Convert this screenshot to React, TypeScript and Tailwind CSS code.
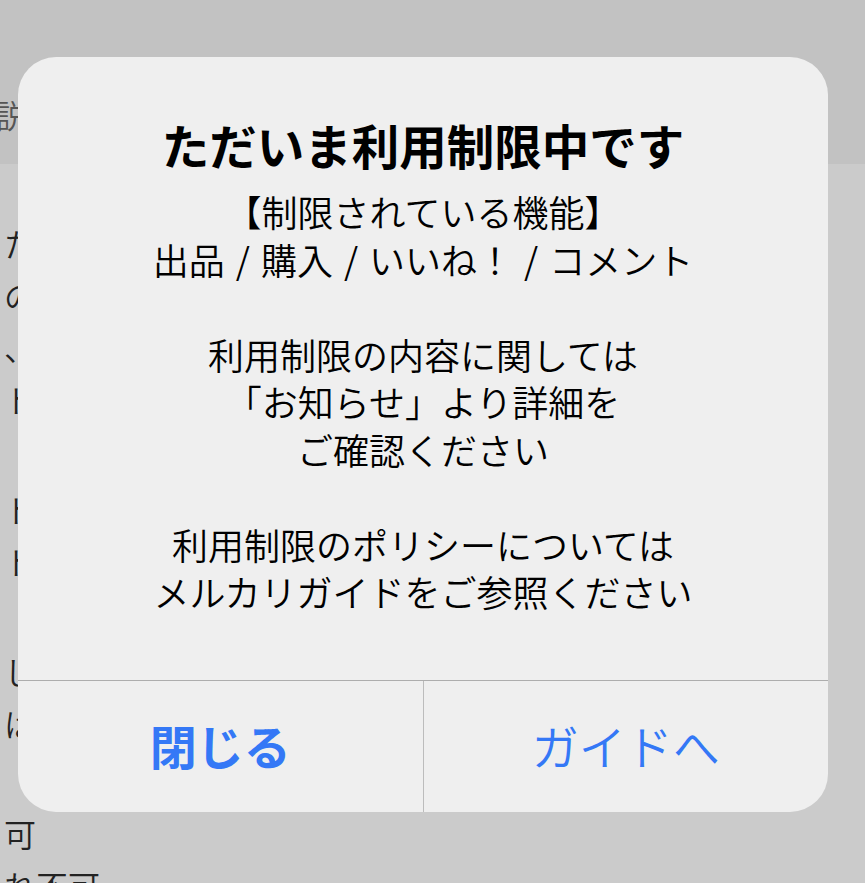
import React from 'react';

const font = { fontFamily: '"Noto Sans CJK JP", "Noto Sans", sans-serif' };

// page text sitting under the dimmed overlay
const pageLines: { text: string; gap?: boolean }[] = [
  { text: 'たくさんの方にご利用いただくため' },
  { text: 'の規約に反する行為が確認された場合' },
  { text: '、利用を一部制限しています' },
  { text: 'ト記の機能が対象となります', gap: true },
  { text: 'ト記の内容をご確認ください' },
  { text: 'ト記以外の機能はご利用いただけます', gap: true },
  { text: 'しばらく経ってから再度お試しください' },
  { text: 'はじめての方はガイドをご覧ください', gap: true },
  { text: '可' },
  { text: 'れ不可' },
];

const AlertDialog: React.FC = () => {
  return (
    <div className="absolute left-[18px] top-[57px] w-[810px] h-[755px] rounded-[38px] bg-[#efefef] flex flex-col overflow-hidden">
      <div className="h-[623px] flex flex-col items-center pt-[60px] text-center">
        <h2 className="text-[47.5px] leading-[56px] font-bold text-black">ただいま利用制限中です</h2>
        <div className="mt-[15px] text-[36px] leading-[47.5px] font-[350] text-black">
          <p>【制限されている機能】</p>
          <p className="[word-spacing:3px]">出品 / 購入 / いいね！ / コメント</p>
          <p>&nbsp;</p>
          <p>利用制限の内容に関しては</p>
          <p>「お知らせ」より詳細を</p>
          <p>ご確認ください</p>
          <p>&nbsp;</p>
          <p>利用制限のポリシーについては</p>
          <p>メルカリガイドをご参照ください</p>
        </div>
      </div>
      <div className="flex-1 flex border-t border-[#adadad]">
        <button className="flex-1 flex items-center justify-center pb-[2px] text-[47px] font-bold text-[#3478f6] border-r border-[#bcbcbc]">
          閉じる
        </button>
        <button className="flex-1 flex items-center justify-center pb-[2px] text-[47px] font-[350] text-[#3478f6]">
          ガイドへ
        </button>
      </div>
    </div>
  );
};

export default function App() {
  return (
    <div className="relative w-[865px] h-[883px] overflow-hidden bg-[#cbcbcb]" style={font}>
      <div className="h-[164px] bg-[#c2c2c2] flex items-center">
        <span className="ml-[-4px] mt-[64px] text-[32px] leading-none font-[350] text-[#555]">説明</span>
      </div>
      <div className="pt-[53px] pl-[4px] text-[32px] leading-[52px] font-[350] text-[#222] whitespace-nowrap">
        {pageLines.map((line, i) => (
          <p key={i} className={line.gap ? 'mb-[58px]' : ''}>
            {line.text}
          </p>
        ))}
      </div>
      <AlertDialog />
    </div>
  );
}
